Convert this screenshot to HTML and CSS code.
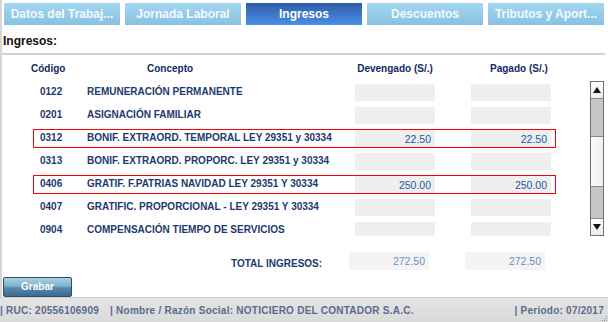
FILE: index.html
```html
<!DOCTYPE html>
<html lang="es">
<head>
<meta charset="utf-8">
<title>Ingresos</title>
<link rel="stylesheet" href="styles.css">
</head>
<body>
<div class="main">
  <div class="tabs">
    <div class="tab">Datos del Trabaj...</div>
    <div class="tab">Jornada Laboral</div>
    <div class="tab active">Ingresos</div>
    <div class="tab">Descuentos</div>
    <div class="tab">Tributos y Aport...</div>
  </div>
  <div class="section-title">Ingresos:</div>
  <div class="rule"></div>
  <div class="thead">
    <span class="h-code">Código</span>
    <span class="h-concept">Concepto</span>
    <span class="h-dev">Devengado (S/.)</span>
    <span class="h-pag">Pagado (S/.)</span>
  </div>
  <div class="list-wrap">
    <div class="list">
      <div class="row"><span class="c-code">0122</span><span class="c-concept">REMUNERACIÓN PERMANENTE</span><span class="inp"></span><span class="inp"></span></div>
      <div class="row"><span class="c-code">0201</span><span class="c-concept">ASIGNACIÓN FAMILIAR</span><span class="inp"></span><span class="inp"></span></div>
      <div class="row marked"><span class="c-code">0312</span><span class="c-concept">BONIF. EXTRAORD. TEMPORAL LEY 29351 y 30334</span><span class="inp">22.50</span><span class="inp">22.50</span></div>
      <div class="row"><span class="c-code">0313</span><span class="c-concept">BONIF. EXTRAORD. PROPORC. LEY 29351 y 30334</span><span class="inp"></span><span class="inp"></span></div>
      <div class="row marked"><span class="c-code">0406</span><span class="c-concept">GRATIF. F.PATRIAS NAVIDAD LEY 29351 Y 30334</span><span class="inp">250.00</span><span class="inp">250.00</span></div>
      <div class="row"><span class="c-code">0407</span><span class="c-concept">GRATIFIC. PROPORCIONAL - LEY 29351 Y 30334</span><span class="inp"></span><span class="inp"></span></div>
      <div class="row"><span class="c-code">0904</span><span class="c-concept">COMPENSACIÓN TIEMPO DE SERVICIOS</span><span class="inp"></span><span class="inp"></span></div>
    </div>
    <div class="scrollbar">
      <div class="sb-btn"><svg width="8" height="6" viewBox="0 0 8 6"><path d="M0 6 L4 0 L8 6 Z" fill="#111"/></svg></div>
      <div class="sb-track t1"></div>
      <div class="sb-thumb"></div>
      <div class="sb-track t2"></div>
      <div class="sb-btn down"><svg width="8" height="6" viewBox="0 0 8 6"><path d="M0 0 L8 0 L4 6 Z" fill="#111"/></svg></div>
    </div>
  </div>
  <div class="total-row">
    <span class="total-label">TOTAL INGRESOS:</span>
    <span class="tot">272.50</span>
    <span class="tot">272.50</span>
  </div>
  <div class="actions"><button class="btn">Grabar</button></div>
</div>
<div class="footer">
  <span class="f-item">| RUC: 20556106909</span>
  <span class="f-item">| Nombre / Razón Social: NOTICIERO DEL CONTADOR S.A.C.</span>
  <span class="f-item f-right">| Periodo: 07/2017</span>
  <svg class="grip" width="6" height="6" viewBox="0 0 6 6"><rect x="4" y="0" width="1" height="1" fill="#999"/><rect x="2" y="2" width="1" height="1" fill="#999"/><rect x="4" y="2" width="1" height="1" fill="#999"/><rect x="0" y="4" width="1" height="1" fill="#999"/><rect x="2" y="4" width="1" height="1" fill="#999"/><rect x="4" y="4" width="1" height="1" fill="#999"/></svg>
</div>
</body>
</html>
```

FILE: styles.css
```css
* { box-sizing: border-box; }
html, body { margin: 0; padding: 0; }
body {
  width: 608px;
  height: 322px;
  overflow: hidden;
  background: #fff;
  font-family: "Liberation Sans", Arial, sans-serif;
}
.main {
  border-left: 2px solid #d6d6d6;
  height: 297px;
  display: flex;
  flex-direction: column;
}
.tabs {
  display: flex;
  gap: 5px;
  padding: 3px 0 0 2px;
}
.tab {
  width: 116px;
  height: 22px;
  background: linear-gradient(#a2d7f1, #89c1e1);
  color: #f4faff;
  font-size: 12px;
  font-weight: bold;
  display: flex;
  align-items: center;
  justify-content: center;
  white-space: nowrap;
}
.tab.active {
  background: linear-gradient(#2f5ea6, #4a8fe7);
  color: #fff;
}
.section-title {
  margin-top: 8px;
  padding-left: 1px;
  height: 16px;
  line-height: 16px;
  font-size: 12px;
  font-weight: bold;
  color: #111;
}
.rule {
  margin-top: 4px;
  margin-right: 3px;
  height: 2px;
  background: #d2d2d2;
}
.thead {
  height: 26px;
  display: flex;
  align-items: center;
  padding-left: 29px;
  font-size: 10px;
  font-weight: bold;
  color: #0e2b62;
}
.h-code { width: 116px; }
.h-concept { width: 208px; }
.h-dev { width: 80px; text-align: center; }
.h-pag { margin-left: 55px; }
.list-wrap {
  display: flex;
  height: 155px;
}
.list {
  flex: 1;
  overflow: hidden;
  padding-left: 31px;
  display: flex;
  flex-direction: column;
}
.row {
  flex: none;
  width: 523px;
  height: 19px;
  margin: 2px 0;
  border: 1px solid transparent;
  padding: 0 4px 0 6px;
  display: flex;
  align-items: center;
  font-size: 10px;
  font-weight: bold;
  color: #1c3a6e;
}
.row.marked {
  border-color: red;
}
.c-code, .c-concept {
  align-self: flex-start;
  line-height: 15px;
}
.c-code { width: 47px; }
.c-concept { width: 268px; white-space: nowrap; }
.inp {
  width: 80px;
  height: 17px;
  background: #efefef;
  font-size: 10.5px;
  font-weight: normal;
  color: #2358a0;
  text-align: right;
  padding-right: 4px;
  line-height: 19px;
}
.inp + .inp { margin-left: 36px; }
.scrollbar {
  width: 14px;
  margin-right: 4px;
  border: 1px solid #6f6f6f;
  display: flex;
  flex-direction: column;
  background: #c6c6c6;
}
.sb-btn {
  height: 17px;
  background: linear-gradient(#fff, #ececec);
  border-bottom: 1px solid #8a8a8a;
  display: flex;
  align-items: center;
  justify-content: center;
}
.sb-btn.down {
  border-bottom: none;
  border-top: 1px solid #8a8a8a;
}
.sb-track.t1 { height: 37px; }
.sb-track.t2 { flex: 1; }
.sb-thumb {
  height: 51px;
  background: linear-gradient(90deg, #fafafa, #efefef);
  border-top: 1px solid #8a8a8a;
  border-bottom: 1px solid #8a8a8a;
}
.total-row {
  margin-top: 16px;
  height: 18px;
  display: flex;
  align-items: center;
  padding-left: 229px;
}
.total-label {
  width: 118px;
  font-size: 10px;
  font-weight: bold;
  color: #1c3a6e;
  padding-top: 4px;
}
.tot {
  width: 80px;
  height: 18px;
  background: #f4f4f4;
  color: #6a8ec0;
  font-size: 10.5px;
  text-align: right;
  padding-right: 4px;
  line-height: 18px;
}
.tot + .tot { margin-left: 36px; }
.actions {
  margin-top: 6px;
  padding-left: 1px;
}
.btn {
  width: 69px;
  height: 20px;
  margin: 0;
  padding: 0;
  border: 1px solid #2f4b66;
  border-radius: 2px;
  background: linear-gradient(#a9d1e4 0%, #7fb1cc 45%, #5688ad 55%, #3c6a91 100%);
  color: #fff;
  font-family: "Liberation Sans", Arial, sans-serif;
  font-size: 10px;
  font-weight: bold;
}
.footer {
  position: relative;
  height: 25px;
  border-top: 1px solid #cdcdcd;
  background: linear-gradient(#e4e4e4, #dadada);
  display: flex;
  align-items: center;
  gap: 11px;
  padding: 0 4px 0 0;
  font-size: 10px;
  font-weight: bold;
  color: #5a6a8c;
  letter-spacing: 0.25px;
  white-space: nowrap;
}
.f-right { margin-left: auto; }
.grip {
  position: absolute;
  right: 0;
  bottom: 0;
}
```
